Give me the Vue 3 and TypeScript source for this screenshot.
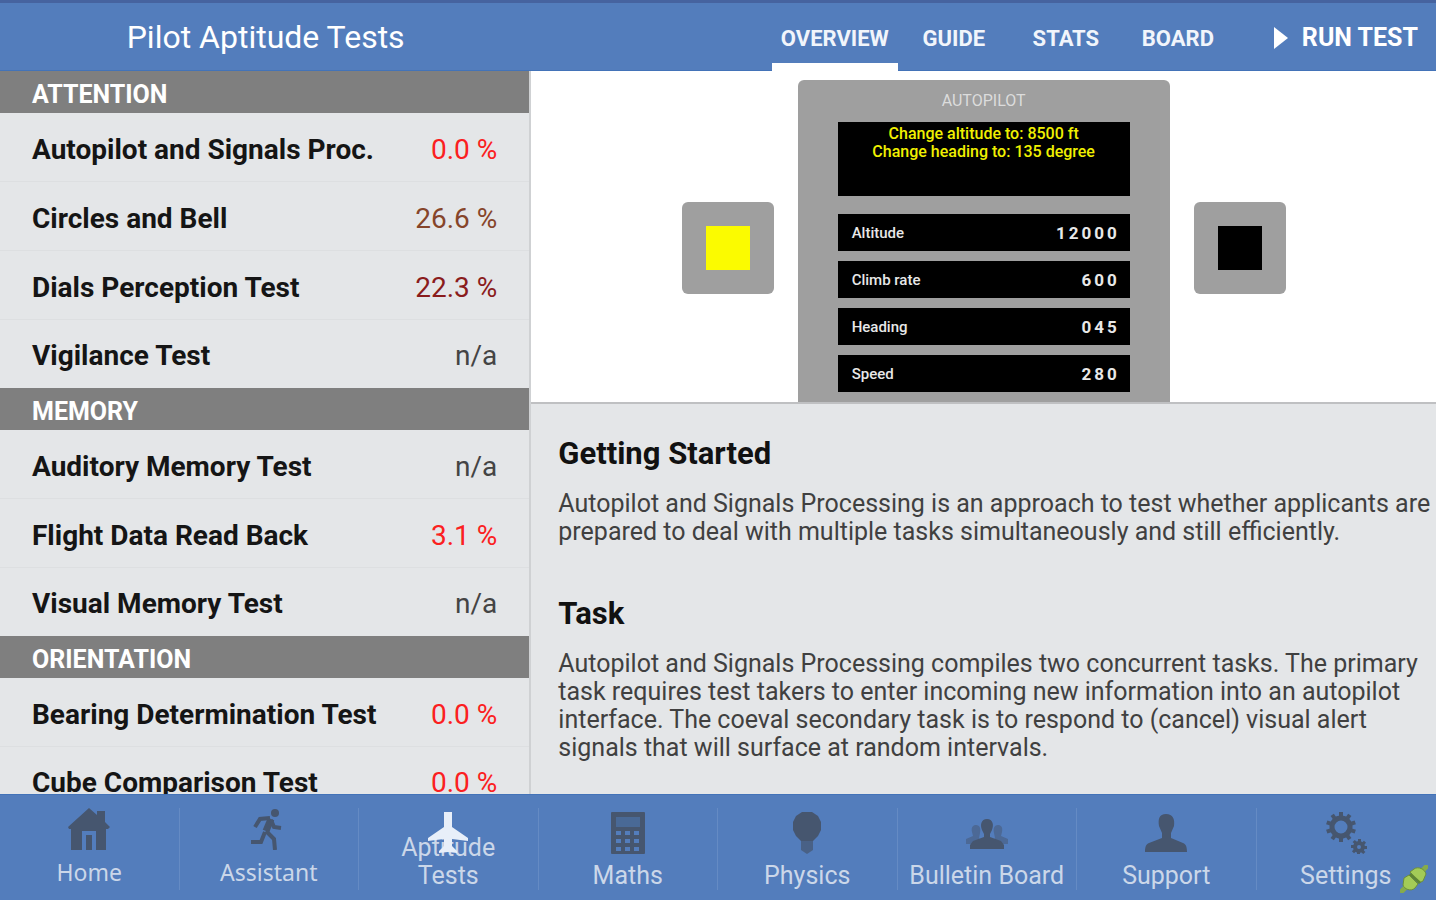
<script setup lang="ts">
import { ref } from 'vue'

interface TestEntry { name: string; score: string; tone: string }
interface Section { title: string; tests: TestEntry[] }

const sections: Section[] = [
  {
    title: 'ATTENTION',
    tests: [
      { name: 'Autopilot and Signals Proc.', score: '0.0 %', tone: 'low' },
      { name: 'Circles and Bell', score: '26.6 %', tone: 'mid' },
      { name: 'Dials Perception Test', score: '22.3 %', tone: 'dark' },
      { name: 'Vigilance Test', score: 'n/a', tone: 'none' },
    ],
  },
  {
    title: 'MEMORY',
    tests: [
      { name: 'Auditory Memory Test', score: 'n/a', tone: 'none' },
      { name: 'Flight Data Read Back', score: '3.1 %', tone: 'low' },
      { name: 'Visual Memory Test', score: 'n/a', tone: 'none' },
    ],
  },
  {
    title: 'ORIENTATION',
    tests: [
      { name: 'Bearing Determination Test', score: '0.0 %', tone: 'low' },
      { name: 'Cube Comparison Test', score: '0.0 %', tone: 'low' },
    ],
  },
]

const tabs = ['OVERVIEW', 'GUIDE', 'STATS', 'BOARD']
const activeTab = ref('OVERVIEW')

const readouts = [
  { label: 'Altitude', value: '12000' },
  { label: 'Climb rate', value: '600' },
  { label: 'Heading', value: '045' },
  { label: 'Speed', value: '280' },
]

const navItems = [
  { id: 'home', label: 'Home' },
  { id: 'assistant', label: 'Assistant' },
  { id: 'aptitude', label: 'Aptitude Tests' },
  { id: 'maths', label: 'Maths' },
  { id: 'physics', label: 'Physics' },
  { id: 'bulletin', label: 'Bulletin Board' },
  { id: 'support', label: 'Support' },
  { id: 'settings', label: 'Settings' },
]

const keyRows = [19, 27, 35]
const keyColumns = [5, 14, 23]
const teeth = [0, 36, 72, 108, 144, 180, 216, 252, 288, 324]
const smallTeeth = [0, 45, 90, 135, 180, 225, 270, 315]
</script>

<template>
  <div class="app">
    <header class="topbar">
      <h1 class="title">Pilot Aptitude Tests</h1>
      <div class="actions">
        <nav class="tabs">
          <button
            v-for="tab in tabs"
            :key="tab"
            type="button"
            class="tab"
            :class="{ active: tab === activeTab }"
            @click="activeTab = tab"
          >{{ tab }}</button>
        </nav>
        <button type="button" class="run">
          <svg width="14" height="22" viewBox="0 0 14 22"><path d="M0 0L14 11L0 22Z" fill="#fff" /></svg>
          <span>RUN TEST</span>
        </button>
      </div>
    </header>

    <div class="body">
      <aside class="sidebar">
        <section v-for="section in sections" :key="section.title">
          <h2 class="section-title">{{ section.title }}</h2>
          <button v-for="test in section.tests" :key="test.name" type="button" class="test">
            <span class="test-name">{{ test.name }}</span>
            <span :class="['score', test.tone]">{{ test.score }}</span>
          </button>
        </section>
      </aside>

      <main class="content">
        <div class="preview">
          <div class="signal"><span class="lamp lit"></span></div>
          <div class="panel">
            <div class="panel-title">AUTOPILOT</div>
            <div class="display">
              <div>Change altitude to: 8500 ft</div>
              <div>Change heading to: 135 degree</div>
            </div>
            <div class="readouts">
              <div v-for="item in readouts" :key="item.label" class="readout">
                <span>{{ item.label }}</span>
                <span class="value">{{ item.value }}</span>
              </div>
            </div>
          </div>
          <div class="signal"><span class="lamp"></span></div>
        </div>
        <article class="article">
          <h2>Getting Started</h2>
          <p>Autopilot and Signals Processing is an approach to test whether applicants are prepared to deal with multiple tasks simultaneously and still efficiently.</p>
          <h2>Task</h2>
          <p>Autopilot and Signals Processing compiles two concurrent tasks. The primary task requires test takers to enter incoming new information into an autopilot interface. The coeval secondary task is to respond to (cancel) visual alert signals that will surface at random intervals.</p>
        </article>
      </main>
    </div>

    <nav class="bottom">
      <a v-for="item in navItems" :key="item.id" href="#" class="item" :class="item.id">
        <svg v-if="item.id === 'home'" class="icon" viewBox="0 0 42 42">
          <path d="M21 0L29 7V3H37V14L42 19L40 21H38V42H28V23H14V42H3V21H1L0 19Z" />
          <path d="M18 27H24V42H18Z" />
        </svg>
        <svg v-else-if="item.id === 'assistant'" class="icon" viewBox="-2 0 42 42">
          <circle cx="25" cy="5" r="4" />
          <path class="limb" d="M21 11L16 23" stroke-width="7" />
          <path class="limb" d="M20 10L10 11L5 19M21 12L24 19L31 20M15 24L11 34H1M16 23L24 31L25 42" stroke-width="4" />
        </svg>
        <svg v-else-if="item.id === 'aptitude'" class="icon" viewBox="0 0 42 42">
          <path d="M17 0H25V15L41 26V29L25 27V34L30 39V41L21 40L12 41V39L17 34V27L1 29V26L17 15Z" />
        </svg>
        <svg v-else-if="item.id === 'maths'" class="icon" viewBox="-4 0 42 42">
          <rect width="34" height="42" rx="1" />
          <rect class="cutout screen" x="5" y="5" width="24" height="10" />
          <template v-for="y in keyRows" :key="y">
            <rect v-for="x in keyColumns" :key="x" class="cutout" :x="x" :y="y" width="5" height="4" />
          </template>
        </svg>
        <svg v-else-if="item.id === 'physics'" class="icon" viewBox="0 0 42 42">
          <path d="M16 0H26L32 4L35 10V18L32 24L27 29H15L10 24L7 18V10L10 4Z" />
          <path d="M15 29H27V38L21 42L15 38Z" opacity="0.7" />
        </svg>
        <svg v-else-if="item.id === 'bulletin'" class="icon" viewBox="0 -7 42 42">
          <path opacity="0.5" d="M10 6C14 6 15 10 14 14L13 19L16 25H0V20L7 17L6 13C5 8 7 6 10 6ZM32 6C28 6 27 10 28 14L29 19L26 25H42V20L35 17L36 13C37 8 35 6 32 6Z" />
          <path d="M21 0C27 0 28 6 26 11L24 15V18L35 22L38 26V30H4V26L7 22L18 18V15L16 11C14 6 15 0 21 0Z" />
        </svg>
        <svg v-else-if="item.id === 'support'" class="icon" viewBox="0 0 42 42">
          <path d="M21 2C28 2 30 7 29 14L26 21V26L38 31C41 32 42 35 42 40H0C0 35 1 32 4 31L17 26V21L14 14C13 7 14 2 21 2Z" />
        </svg>
        <svg v-else class="icon" viewBox="0 0 42 42">
          <circle cx="16" cy="15" r="9" class="ring" stroke-width="5" />
          <rect v-for="angle in teeth" :key="angle" x="14" y="0" width="4" height="5" :transform="`rotate(${angle} 16 15)`" />
          <circle cx="34" cy="35" r="4" class="ring" stroke-width="4" />
          <rect v-for="angle in smallTeeth" :key="`s${angle}`" x="33" y="27" width="3" height="3" :transform="`rotate(${angle} 34 35)`" />
        </svg>
        <span class="label">{{ item.label }}</span>
      </a>
      <svg class="plug" viewBox="0 0 28 28">
        <path d="M2 26L7 21M21 7L26 2" stroke="#86ab4c" stroke-width="5" stroke-linecap="round" />
        <path d="M4 13L9 10L18 19L15 23C11 27 4 24 3 20Z" fill="#a3cb57" stroke="#6c8f3a" />
        <path d="M10 7L14 4C18 1 25 4 26 9L23 16L19 18Z" fill="#a3cb57" stroke="#6c8f3a" />
        <path d="M10 9L20 18" stroke="#5d8433" stroke-width="3" />
      </svg>
    </nav>
  </div>
</template>

<style>
body {
  margin: 0;
}
</style>

<style scoped>
.app {
  display: flex;
  flex-direction: column;
  height: 100vh;
  overflow: hidden;
  background: #e4e6e8;
  color: #111;
  font-family: Roboto, "Liberation Sans", sans-serif;
}

.app * {
  box-sizing: border-box;
}

button {
  border: 0;
  margin: 0;
  background: none;
  font-family: inherit;
  cursor: pointer;
}

.topbar {
  display: flex;
  flex: none;
  height: 71px;
  border-top: 3px solid #46639f;
  border-bottom: 1px solid #4373b8;
  background: #537dbc;
  color: #fff;
}

.title {
  flex: 0 0 37%;
  margin: 0;
  font-size: 32px;
  line-height: 68px;
  font-weight: 400;
  text-align: center;
}

.actions {
  display: flex;
  flex: 1;
  justify-content: flex-end;
}

.tabs {
  display: flex;
  margin-bottom: -1px;
}

.tab {
  min-width: 112px;
  padding: 10px 9px 0;
  border-bottom: 8px solid transparent;
  color: #f1f5fb;
  font-size: 22px;
  font-weight: 700;
}

.tab.active {
  border-bottom-color: #fff;
}

.run {
  display: flex;
  align-items: center;
  gap: 14px;
  padding: 2px 18px 0 40px;
  color: #fff;
  font-size: 25px;
  font-weight: 700;
}

.body {
  display: flex;
  flex: 1;
  min-height: 0;
}

.sidebar {
  flex: 0 0 37%;
  overflow: hidden;
  border-right: 2px solid #cfd1d3;
}

.section-title {
  margin: 0;
  padding: 5px 32px 0;
  background: #7f7f7f;
  color: #fff;
  font-size: 25px;
  line-height: 37px;
  font-weight: 700;
}

.test {
  display: flex;
  align-items: center;
  justify-content: space-between;
  width: 100%;
  height: 69px;
  padding: 4px 32px 0;
  border-bottom: 1px solid #dddfe1;
  font-size: 28px;
  text-align: left;
}

.test:last-child {
  height: 68px;
  border-bottom-color: transparent;
}

.test-name {
  color: #151515;
  font-weight: 700;
}

.score {
  color: #444;
}

.score.low {
  color: #fb2020;
}

.score.mid {
  color: #86452a;
}

.score.dark {
  color: #8a1c1c;
}

.content {
  display: flex;
  flex: 1;
  flex-direction: column;
  min-width: 0;
}

.preview {
  display: flex;
  flex: none;
  align-items: flex-start;
  justify-content: center;
  gap: 24px;
  height: 333px;
  padding-top: 9px;
  overflow: hidden;
  border-bottom: 2px solid #bfc0c2;
  background: #fff;
}

.signal {
  display: flex;
  align-items: center;
  justify-content: center;
  width: 92px;
  height: 92px;
  margin-top: 122px;
  border-radius: 6px;
  background: #9f9f9f;
}

.lamp {
  width: 44px;
  height: 44px;
  background: #000;
}

.lamp.lit {
  background: #fbfb00;
}

.panel {
  width: 372px;
  height: 340px;
  padding: 0 40px;
  border-radius: 6px;
  background: #9f9f9f;
}

.panel-title {
  color: #dcdcdc;
  font-size: 16px;
  line-height: 42px;
  text-align: center;
}

.display {
  height: 74px;
  padding-top: 3px;
  background: #000;
  color: #f0f000;
  font-size: 16px;
  line-height: 18px;
  font-weight: 500;
  text-align: center;
}

.readouts {
  display: flex;
  flex-direction: column;
  gap: 10px;
  margin-top: 18px;
}

.readout {
  display: flex;
  align-items: center;
  justify-content: space-between;
  height: 37px;
  padding: 0 10px 0 14px;
  background: #000;
  color: #e8e8e8;
  font-size: 15px;
  font-weight: 500;
}

.value {
  font-size: 17px;
  font-weight: 700;
  letter-spacing: 3px;
}

.article {
  flex: 1;
  min-height: 0;
  padding: 30px 0 0 27px;
  overflow: hidden;
}

.article h2 {
  margin: 0;
  font-size: 31px;
  line-height: 40px;
  font-weight: 700;
}

.article p {
  margin: 16px 0 48px;
  color: #404040;
  font-size: 25px;
  line-height: 28px;
}

.bottom {
  position: relative;
  display: flex;
  flex: none;
  height: 106px;
  padding: 13px 0 10px;
  border-top: 1px solid #4373b8;
  background: #537dbc;
}

.item {
  position: relative;
  display: flex;
  flex: 1;
  flex-direction: column;
  align-items: center;
  gap: 8px;
  padding-top: 4px;
  border-right: 1px solid #658bc4;
  color: #cbd7e9;
  font-size: 25px;
  line-height: 28px;
  text-align: center;
  text-decoration: none;
}

.item:last-of-type {
  border-right-color: transparent;
}

.home,
.assistant {
  padding-top: 0;
  font-family: "Noto Sans", Roboto, sans-serif;
  font-size: 23px;
}

.icon {
  flex: none;
  width: 42px;
  height: 42px;
  fill: #46566f;
}

.limb,
.ring {
  fill: none;
  stroke: #46566f;
}

.cutout {
  fill: #537dbc;
}

.cutout.screen {
  fill: #496996;
}

.aptitude {
  justify-content: flex-end;
}

.aptitude .icon {
  position: absolute;
  top: 4px;
  z-index: 1;
  fill: #e8eff9;
}

.aptitude .label {
  width: 100px;
}

.plug {
  position: absolute;
  right: 8px;
  bottom: 7px;
  width: 28px;
  height: 28px;
  fill: none;
}
</style>
